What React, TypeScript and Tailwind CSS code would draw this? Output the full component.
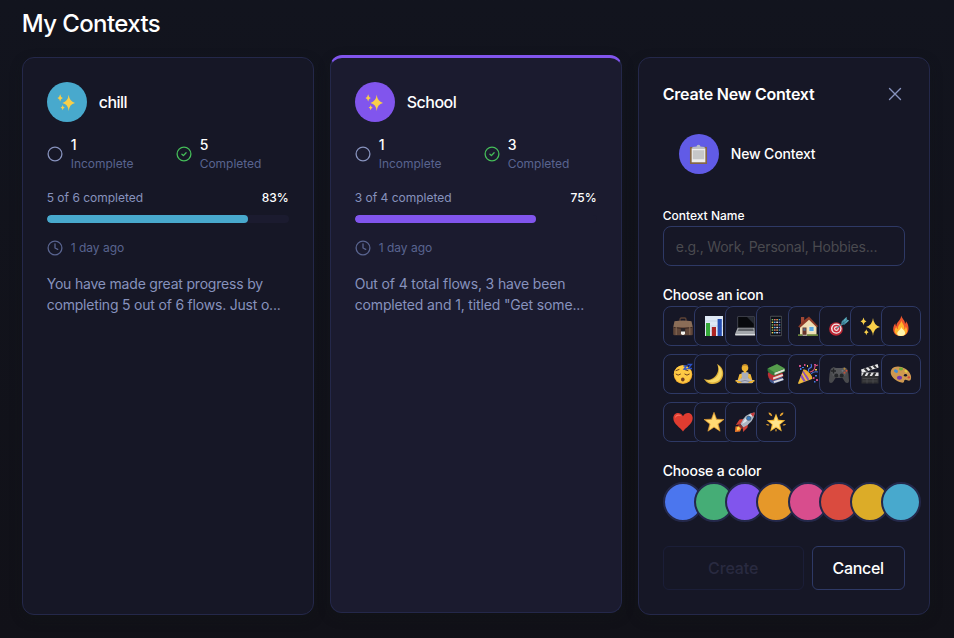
import type { ReactNode } from "react";

const emojis: Record<string, ReactNode> = {
  briefcase: (
    <>
      <path d="M7 5V3.4Q7 2 8.300 2h3.400Q13 2 13 3.400V5" fill="none" stroke="#5d4336" strokeWidth="1.300" />
      <path d="M1.500 5.200Q10 3.800 18.500 5.200L20 12H0Z" fill="#8a6d57" />
      <path d="M.2 11.300h19.600V18q0 1.300-1.300 1.300h-17Q.2 19.300.2 18Z" fill="#604639" />
      <path d="M.2 11.300Q10 14 19.800 11.300" fill="none" stroke="#33231e" strokeWidth=".8" />
      <path d="M3.200 5v14M16.800 5v14" stroke="#8d7059" strokeWidth=".9" />
      <rect x="7.800" y="12" width="4.400" height="5" rx=".8" fill="#292529" />
      <path d="M8 15.500h4v2.500q-2 1.800-4 0Z" fill="#f4f3ee" />
    </>
  ),
  chart: (
    <>
      <path d="M1 0h18v20H1Z" fill="#dfe9f5" />
      <path d="M1 5h18M1 10h18M1 15h18" stroke="#bccce2" strokeWidth=".6" />
      <path d="M2 7h4v13H2Z" fill="#35a839" />
      <path d="M7.800 11h4.200v9H7.800Z" fill="#ad2423" />
      <path d="M13.600 3h4.200v17h-4.200Z" fill="#264fb4" />
    </>
  ),
  laptop: (
    <>
      <path d="M2.500.5h17v11.800h-17Z" fill="#5c6066" />
      <path d="M3.100 1h15.800v10.500H3.100Z" fill="#08090d" />
      <path d="M12 1h6.900v7Z" fill="#282c35" />
      <path d="M2.500 12h17l.5 6H0Z" fill="#a4a7ab" />
      <path d="M3.700 12.600h14.500l.5 2.500H2.900Z" fill="#5c5f64" />
      <path d="M0 18h20v1.500H.4Z" fill="#dadcde" />
    </>
  ),
  phone: (
    <>
      <rect x="4.100" y="-.2" width="11.800" height="20.400" rx="1" fill="#484b51" />
      <path d="M4.900.8h10.200v18.300H4.900Z" fill="#0d0f17" />
      {[3, 5.6, 8.2, 10.8, 13.4, 16].map((y, i) => (
        <g key={y}>
          <rect x="5.700" y={y} width="1.600" height="1.400" fill={i % 2 ? "#efd65c" : "#70bb69"} />
          <rect x="8" y={y} width="1.600" height="1.400" fill={i % 2 ? "#4daee6" : "#de6c79"} />
          <rect x="10.300" y={y} width="1.600" height="1.400" fill={i % 2 ? "#f0eff0" : "#e59c47"} />
          <rect x="12.700" y={y} width="1.600" height="1.400" fill={i % 2 ? "#8069bb" : "#4299cd"} />
        </g>
      ))}
    </>
  ),
  house: (
    <>
      <path d="M3 1h3.200v7H3Z" fill="#a04734" />
      <path d="M2 9.500 10.500 2 18.500 9.500V19H2Z" fill="#efdfb5" />
      <path d="M.2 10.800 4.500 5.500 11 .6 20 10.300l-1.300.9L11 3.700 2 11.800Z" fill="#8f3c29" />
      <path d="M4.500 11.500h4v7.700h-4Z" fill="#67352c" />
      <path d="M5.300 12.300h2.300v2.400H5.300Z" fill="#50708c" />
      <path d="M11 10.500h5v5h-5Z" fill="#5ba8e2" stroke="#fff5d6" strokeWidth=".7" />
      <path d="M0 18.300h4.500V20H0ZM9 18.300h11V20H9Z" fill="#68843b" />
      <path d="M4.500 18.700H9V20H4.500Z" fill="#aaa49b" />
    </>
  ),
  target: (
    <>
      <ellipse cx="7" cy="13" rx="6.900" ry="6.800" fill="#ba2532" />
      <ellipse cx="7.300" cy="12.600" rx="5.300" ry="5.100" fill="#f2eded" />
      <circle cx="7.400" cy="12.600" r="3.900" fill="#cd2e3d" />
      <circle cx="7.400" cy="12.600" r="2.400" fill="#f5f0ef" />
      <circle cx="7.400" cy="12.600" r="1.200" fill="#c62938" />
      <path d="m7.500 12.400 8.200-6" stroke="#498b9b" strokeWidth="1.100" />
      <path d="m12.300 8.500.4-3L17.600.8l.2 2.800 2.400.9-4.500 4Z" fill="#58a8b9" />
      <path d="m13 8 5-4M14 4v3l3 .4" stroke="#28647c" strokeWidth=".7" fill="none" />
    </>
  ),
  sparkles: (
    <g fill="#f8cf49">
      <path d="M13 2q.7 7.200 7 9-6.300 1.200-7 9-.7-7.800-7-9 6.300-1.800 7-9Z" />
      <path d="M3.500 1.500q.4 3 3 4-2.600.6-3 4-.4-3.400-3-4 2.600-1 3-4Z" />
      <path d="M6.300 13.200q.3 2.200 2.300 3-2 .6-2.300 3-.3-2.400-2.300-3 2-.8 2.300-3Z" />
    </g>
  ),
  fire: (
    <>
      <path d="M10.200-.5c1 3.500 4 4.800 3.800 8.200.8-.5 1-1.500 1-2.400 4 4.600 4 14.700-5 14.700C1.300 20 .5 11.700 4.400 7.200c0 1.600.3 2.300 1 2.900C5.100 6 10 4.800 10.200-.5Z" fill="#ed562c" />
      <path d="M10.400 4.300c-.2 3.600-4 5-3.500 9-1-.6-1.500-1.500-1.500-2.500C1.500 15.500 5 20 10 20s8.200-4.500 4.700-9.700c0 1.600-.4 2.600-1.400 3.200.8-4.300-2.400-5.700-2.900-9.200Z" fill="#ffb32a" />
      <path d="M10.200 11q-.3 2-2.300 3.500C5 17 6 20 10 20s5.500-3 2.600-6c-.5-.7-2-1.500-2.400-3Z" fill="#fff4ac" />
    </>
  ),
  sleep: (
    <>
      <circle cx="10" cy="10.600" r="9.300" fill="#f2aa2e" />
      <circle cx="9.800" cy="10" r="8.700" fill="#ffca44" />
      <path d="M3 10.200q2 2.100 4.500 0m4.300 0q2.200 2.100 4.500 0M3 6.600l3-1.100m6 .2 3 1" fill="none" stroke="#70411f" strokeWidth="1" strokeLinecap="round" />
      <ellipse cx="9.800" cy="15.400" rx="1.800" ry="2" fill="#743f22" />
      <path d="M10.500 2h3l-2.500 3h3m.5-4.500h4l-3.500 4h4" fill="none" stroke="#2951c8" strokeWidth="1.300" />
    </>
  ),
  moon: (
    <>
      <path d="M13 0c10 4.500 7.500 20-4 20C4.500 20 1.500 17.700 0 14.700 6.500 19 18 10 13 0Z" fill="#dcae38" />
      <path d="M14.200 1.500c6.600 5 4.300 16.600-5.300 17-3 .2-5.600-1.200-7.100-2.400C9 18 18 11.500 14.200 1.500Z" fill="#f8da68" />
    </>
  ),
  yoga: (
    <>
      <circle cx="10" cy="4" r="3.300" fill="#efb432" />
      <path d="M7 3q0-3 3-3t3 3l-1.500-1.200h-3Z" fill="#c38a2a" />
      <path d="M8.600 6h2.800v3l4.200 1.300 1.700 5.600h2.200v1.700h-4.200l-2-4v4H6.700v-4l-2 4H.5v-1.700h2.200l1.700-5.600L8.600 9Z" fill="#f3ba39" />
      <path d="M6.500 8.500 8.600 8q1.400 2 2.800 0l2.100.5-.5 7H7Z" fill="#a9adbb" />
      <path d="m6.800 14-4.500 2.700q-1.500 2.300 1.200 2.500h13q2.700-.2 1.200-2.500L13.200 14 10 15.500Z" fill="#b4b7c3" />
      <path d="m4 18 6-1.600 6 1.600" fill="none" stroke="#777e95" strokeWidth=".8" />
      <path d="M1 17h4l2 2H3Zm18 0h-4l-2 2h4Z" fill="#efb432" />
    </>
  ),
  books: (
    <>
      <path d="m3.500 13 12-.5 2.500 3.500L8 19.700Q2 18.500 3.500 13Z" fill="#455b91" />
      <path d="m7.500 17.300 9.500-3 .5 1.800-9.300 3Z" fill="#dedee2" />
      <path d="m2 8.500 14-1 1.500 4.700L7 16.500Q.6 14.500 2 8.500Z" fill="#bc3035" />
      <path d="m7 13.400 9.500-3.500.6 2-9.900 3.600Z" fill="#e7dcd8" />
      <path d="M1.500 4.500 11 0l8 4.600v3L8.500 11.700Q.7 9 1.500 4.500Z" fill="#34783a" />
      <path d="m8.500 8.800 9.900-3.700.2 2-10 3.800Z" fill="#e1e5d8" />
      <path d="M2 4.300 11 .2l7.600 4.200L8.500 8.400Z" fill="#569c4c" />
    </>
  ),
  party: (
    <>
      <path d="m5.600 5.300 9 9.500L.8 20 0 19.200Z" fill="#f0bd3c" />
      <path d="m4.500 8 1.700-1.500 5.200 9-2 .8Zm-2 5 1.200-3 4 7-1.900.8Z" fill="#8b50bb" />
      <ellipse cx="10" cy="10" rx="1.800" ry="6" transform="rotate(-43 10 10)" fill="#e8aa34" />
      <path d="M11 8Q9.500 5 12 4t1-4m0 10q2-3 7-2" fill="none" stroke="#4772db" strokeWidth="1.200" />
      <path d="M12 8q5-1 5-6l3-1" fill="none" stroke="#d75279" strokeWidth="1.100" />
      <path d="M1 1h2v2H1Zm5-1h1.500v2H6ZM16 0h2v1.500h-2Zm-1 13h1.500v2H15Zm3 2h2v2h-2Z" fill="#cf4c86" />
      <path d="M2 4h1.500v2H2Zm2-1h2v1H4Zm13 8h2v1.500h-2Zm-1 6h1.500v1.500H16Z" fill="#467ce5" />
      <path d="M9 1h1v2H9Zm8 4h2v1.500h-2Z" fill="#f1cf4e" />
    </>
  ),
  game: (
    <>
      <path d="M4.500 3 1.700 5Q0 10 0 16.500 0 19 2 19c2 0 3.500-3.800 4.600-5h6.800c1.100 1.200 2.600 5 4.600 5s2-2 2-2.500Q20 10 18.300 5l-2.800-2-2.500 1H7Z" fill="#494a4d" />
      <path d="M3 4h14l1 4-2 4H4L2 8Z" fill="#56575a" />
      <path d="M4.500 4.500v5M2 7h5" stroke="#232427" strokeWidth="1.500" />
      <circle cx="7.300" cy="11.500" r="2" fill="#242629" />
      <circle cx="12.700" cy="11.500" r="2" fill="#242629" />
      <circle cx="15.500" cy="4.800" r="1" fill="#ba8a34" />
      <circle cx="17.500" cy="6.700" r="1" fill="#d44b33" />
      <circle cx="13.500" cy="6.700" r="1" fill="#71747b" />
      <circle cx="15.500" cy="8.700" r="1" fill="#c05037" />
    </>
  ),
  clapper: (
    <>
      <path d="M1 5.500 17.600 0l1 3.500L2 9Z" fill="#e9e9ea" />
      <path d="m3.500 4.800 2.700 2.700 2-.7-2.400-2.700ZM8 3.300l2.600 2.600 2-.7-2.300-2.600Zm4.500-1.500L15 4.400l2-.7L14.600 1Z" fill="#2d2d30" />
      <path d="M1.500 8.500h17v11h-17Z" fill="#303033" />
      <path d="M1.500 8.500h17V12h-17Z" fill="#dedee0" />
      <path d="m2 12 2-3.500h2.500L4.600 12Zm5 0 2-3.500h2.500L9.600 12Zm5 0 2-3.500h2.500L14.600 12Z" fill="#29292c" />
      <path d="M2.500 14.500h15m-15 2.500h15M7 14.500v5m6-5v5" stroke="#555559" strokeWidth=".6" />
    </>
  ),
  palette: (
    <>
      <path d="M.3 5.800C2.300 2 9 1.400 14 4.600c5.500 3.500 7.200 8.400 5.500 11.300-2 2.300-4.100-1.300-5.800.2-1.500 1.400.5 2.400-2.200 2.600C7 18.700-2.700 12.500.3 5.800Z" fill="#cf9850" />
      <ellipse cx="14.500" cy="11.200" rx="1.600" ry="1.300" fill="#161727" />
      <ellipse cx="5" cy="7.100" rx="2.100" ry="1.600" transform="rotate(25 5 7.100)" fill="#438bd5" />
      <ellipse cx="10" cy="5" rx="2" ry="1.400" fill="#6fac36" />
      <ellipse cx="15" cy="7.300" rx="1.700" ry="1.200" transform="rotate(35 15 7.300)" fill="#e4cf43" />
      <ellipse cx="8.500" cy="13.800" rx="2.600" ry="2" fill="#7438ae" />
      <ellipse cx="17.800" cy="13.400" rx="1.300" ry="1.100" fill="#d34c39" />
    </>
  ),
  heart: (
    <>
      <path d="M10 19.500C7.500 15.500.3 12.300.3 6 .3.400 7.400-1 10 4.300 12.600-1 19.700.4 19.700 6c0 6.300-7.200 9.500-9.700 13.500Z" fill="#df3c30" />
      <path d="M2 6.500C1.800 2.300 6 1 8.700 4.500 6.300 3.200 3 3.500 2 6.500Z" fill="#fa6f5c" />
    </>
  ),
  star: (
    <>
      <path d="m10 .3 2.600 6.900 7.300.3-5.700 4.600 1.900 7.100L10 15.200l-6.100 4 1.900-7.100L.1 7.500l7.300-.3Z" fill="#edaa3b" strokeLinejoin="round" stroke="#edaa3b" strokeWidth=".6" />
      <path d="m10 1.800 2 6 6.200.4-4.800 3.900 1.500 5.800L10 14.500l-4.900 3.400 1.500-5.800-4.800-3.900 6.200-.4Z" fill="#ffda74" />
    </>
  ),
  rocket: (
    <>
      <path d="m5 14-4.500.5L0 20l5-.6L7 15Z" fill="#ed792a" />
      <path d="m4 14.500-2 1 .1 3 3-1.500Z" fill="#ffdd59" />
      <path d="m9 7-4.500.5L.8 13l5-.8Zm4 4-.5 4.500L8 20l-.2-5Z" fill="#cf4036" />
      <path d="M5.500 12Q10 1 19.600.4 19.500 10 8 15.500Z" fill="#adb7c3" />
      <path d="M7 12Q11 3 19 .9 14.600 8 7 12Z" fill="#e1e7ed" />
      <path d="M15.500 1.800Q18 .4 19.600.4 19.800 2 18.200 5Z" fill="#c63938" />
      <circle cx="13.700" cy="6.200" r="2.500" fill="#4e687f" />
      <circle cx="13.700" cy="6.200" r="1.600" fill="#377ac0" />
      <path d="m4.500 11.500 4 4-1.500 1.700-4-4Z" fill="#863231" />
    </>
  ),
  glow: (
    <>
      <path d="m10 1.500 2.500 6.200 6.800.5-5.200 4.400 1.700 6.900L10 15.700l-5.800 3.800 1.700-6.900L.7 8.200l6.800-.5Z" fill="#f8bd37" />
      <path d="m10 4.300 1.800 4.800 4.900.2-3.900 3.200 1.300 4.800-4.100-2.800-4.100 2.800 1.300-4.800-3.900-3.200 4.900-.2Z" fill="#ffe58c" />
      <path d="M2.500.5q3.200 0 3.800 3.800Q3 3.700 2.500.5Zm15 0q-3.200 0-3.800 3.800Q17 3.700 17.500.5ZM0 12q2-.3 3.500 1-2 1.500-3.500-1Zm20 0q-2-.3-3.500 1 2 1.500 3.500-1ZM9 17.500h2L10 20Z" fill="#eca731" />
    </>
  ),
  clipboard: (
    <>
      <path d="M1 2h18v18H1Z" fill="#866745" />
      <path d="M2.800 3.500h14.400v14.700H2.800Z" fill="#eeeeed" />
      <path d="M4 5.500h12v9.500H4Z" fill="#c6c7c8" />
      <path d="M3.500 3.800V2.100L8 1.500q0-1.800 2-1.800t2 1.800l4.500.6v1.700Z" fill="#b7bcc7" />
    </>
  ),
};

function Emoji({ name, className = "size-5" }: { name: string; className?: string }) {
  return <svg viewBox="0 0 20 20" className={`shrink-0 overflow-visible ${className}`} aria-hidden="true">{emojis[name]}</svg>;
}

const icons = ["briefcase", "chart", "laptop", "phone", "house", "target", "sparkles", "fire", "sleep", "moon", "yoga", "books", "party", "game", "clapper", "palette", "heart", "star", "rocket", "glow"];
const colors = ["bg-[#4b76ee]", "bg-[#45ad76]", "bg-[#8155ed]", "bg-[#e69829]", "bg-[#d84d8d]", "bg-[#da4b3f]", "bg-[#dcac28]", "bg-[#48a9cd]"];

function Stat({ value, label, done }: { value: number; label: string; done?: boolean }) {
  return (
    <div className="flex items-start gap-2">
      <svg viewBox="0 0 16 16" className={`mt-2.5 size-4 shrink-0 ${done ? "text-[#45bd59]" : "text-[#8792bd]"}`} fill="none" stroke="currentColor" strokeWidth="1.300">
        <circle cx="8" cy="8" r="6.900" />
        {done && <path d="m5.900 8.200 1.500 1.400 2.700-2.900" strokeLinecap="round" strokeLinejoin="round" />}
      </svg>
      <div className="flex flex-col gap-px">
        <span className="text-sm leading-[18px] font-medium text-white">{value}</span>
        <span className="text-xs leading-[18px] tracking-[-0.02px] text-[#59648f]">{label}</span>
      </div>
    </div>
  );
}

interface ContextProps {
  name: string;
  incomplete: number;
  complete: number;
  total: number;
  percent: number;
  lines: string[];
  selected?: boolean;
}

function ContextCard({ name, incomplete, complete, total, percent, lines, selected }: ContextProps) {
  return (
    <article className={`h-[558px] w-[292px] rounded-xl border border-[#24284a] px-6 pt-6 shadow-[0_4px_12px_rgba(16,24,24,.35)] ${selected ? "-translate-y-0.5 border-t-[3px] border-t-[#8155ed] bg-[#1b1b2f]" : "bg-[#161726]"}`}>
      <div className="flex items-center gap-3">
        <div className={`flex size-10 items-center justify-center rounded-full ${selected ? "bg-[#8155ed]" : "bg-[#48a9cd]"}`}><Emoji name="sparkles" className="mr-0.5 size-[18px]" /></div>
        <h2 className="text-base font-medium tracking-[-0.5px] text-white">{name}</h2>
      </div>
      <div className="mt-3.5 grid grid-cols-2 gap-4">
        <Stat value={incomplete} label="Incomplete" />
        <Stat value={complete} label="Completed" done />
      </div>
      <div className="mt-4 flex items-center justify-between text-xs leading-[18px]">
        <span className="text-[#8792bd]">{complete} of {total} completed</span>
        <span className="font-medium text-white">{percent}%</span>
      </div>
      <div className="mt-2 h-2 overflow-hidden rounded-full bg-[#1b1b2f]">
        <div className={`h-full rounded-full ${selected ? "bg-[#8155ed]" : "bg-[#48a9cd]"}`} style={{ width: `${percent}%` }} />
      </div>
      <div className="mt-4 flex items-center gap-2 text-[#59648f]">
        <svg viewBox="0 0 16 16" className="size-4" fill="none" stroke="currentColor" strokeWidth="1.300"><circle cx="8" cy="8" r="6.900" /><path d="M8 3.800V8l2.700 1.400" strokeLinecap="round" strokeLinejoin="round" /></svg>
        <span className="text-xs leading-[18px]">1 day ago</span>
      </div>
      <p className={`mt-4 text-sm leading-[21px] whitespace-nowrap text-[#8792bd] ${selected ? "tracking-[-0.15px]" : "tracking-[-0.2px]"}`}>
        {lines.map((line) => <span key={line} className="block">{line}</span>)}
      </p>
    </article>
  );
}

function CreatePanel() {
  return (
    <section className="h-[558px] w-[292px] rounded-xl border border-[#24284a] bg-[#161726] px-6 pt-6 text-white shadow-[0_4px_12px_rgba(16,24,24,.35)]">
      <div className="flex h-6 items-center justify-between">
        <h2 className="text-base font-semibold tracking-[-0.2px]">Create New Context</h2>
        <button className="flex size-5 items-center justify-center text-[#8792bd]" aria-label="Close">
          <svg viewBox="0 0 20 20" className="size-5" fill="none" stroke="currentColor" strokeWidth="1.400" strokeLinecap="round"><path d="m4.500 4.500 11 11m0-11-11 11" /></svg>
        </button>
      </div>
      <div className="mt-7 flex items-center gap-3 px-4">
        <div className="flex size-10 items-center justify-center rounded-full bg-[#615be6]"><Emoji name="clipboard" className="size-[19px]" /></div>
        <span className="text-sm font-medium tracking-[-0.15px]">New Context</span>
      </div>
      <label className="mt-[33px] block text-xs leading-[18px] font-medium">Context Name</label>
      <input className="mt-px block h-10 w-full rounded-lg border border-[#2e3965] bg-transparent px-3 text-sm tracking-[-0.2px] placeholder:text-[#4a4a4f]" placeholder="e.g., Work, Personal, Hobbies..." />
      <div className="mt-[18px] text-sm leading-[22px] font-medium tracking-[-0.2px]">Choose an icon</div>
      <div className="grid grid-cols-8 gap-2">
        {icons.map((icon) => (
          <button key={icon} className="flex size-10 items-center justify-center rounded-lg border border-[#2e3965] bg-[#161726]"><Emoji name={icon} /></button>
        ))}
      </div>
      <div className="mt-[18px] text-sm leading-[22px] font-medium tracking-[-0.15px]">Choose a color</div>
      <div className="grid grid-cols-8 gap-2">
        {colors.map((color) => <button key={color} aria-label="Color" className={`size-10 rounded-full border-2 border-[#24284a] ${color}`} />)}
      </div>
      <div className="mt-6 flex gap-2">
        <button disabled className="h-11 w-[141px] rounded-md border border-[#1b1e38] text-base font-medium tracking-[-0.1px] text-[#292a40]">Create</button>
        <button className="h-11 w-[93px] rounded-md border border-[#2e3965] text-base font-medium tracking-[-0.3px]">Cancel</button>
      </div>
    </section>
  );
}

export default function App() {
  return (
    <main className="h-[638px] w-[954px] overflow-hidden bg-linear-to-b from-[#12141e] to-[#111118] pt-2 pl-[21.7px] font-[Inter,sans-serif]">
      <h1 className="h-8 text-2xl leading-8 font-medium tracking-[-0.6px] text-white">My Contexts</h1>
      <div className="mt-[17px] flex gap-4">
        <ContextCard name="chill" incomplete={1} complete={5} total={6} percent={83} lines={["You have made great progress by", "completing 5 out of 6 flows. Just o..."]} />
        <ContextCard name="School" incomplete={1} complete={3} total={4} percent={75} lines={["Out of 4 total flows, 3 have been", 'completed and 1, titled "Get some...']} selected />
        <CreatePanel />
      </div>
    </main>
  );
}
